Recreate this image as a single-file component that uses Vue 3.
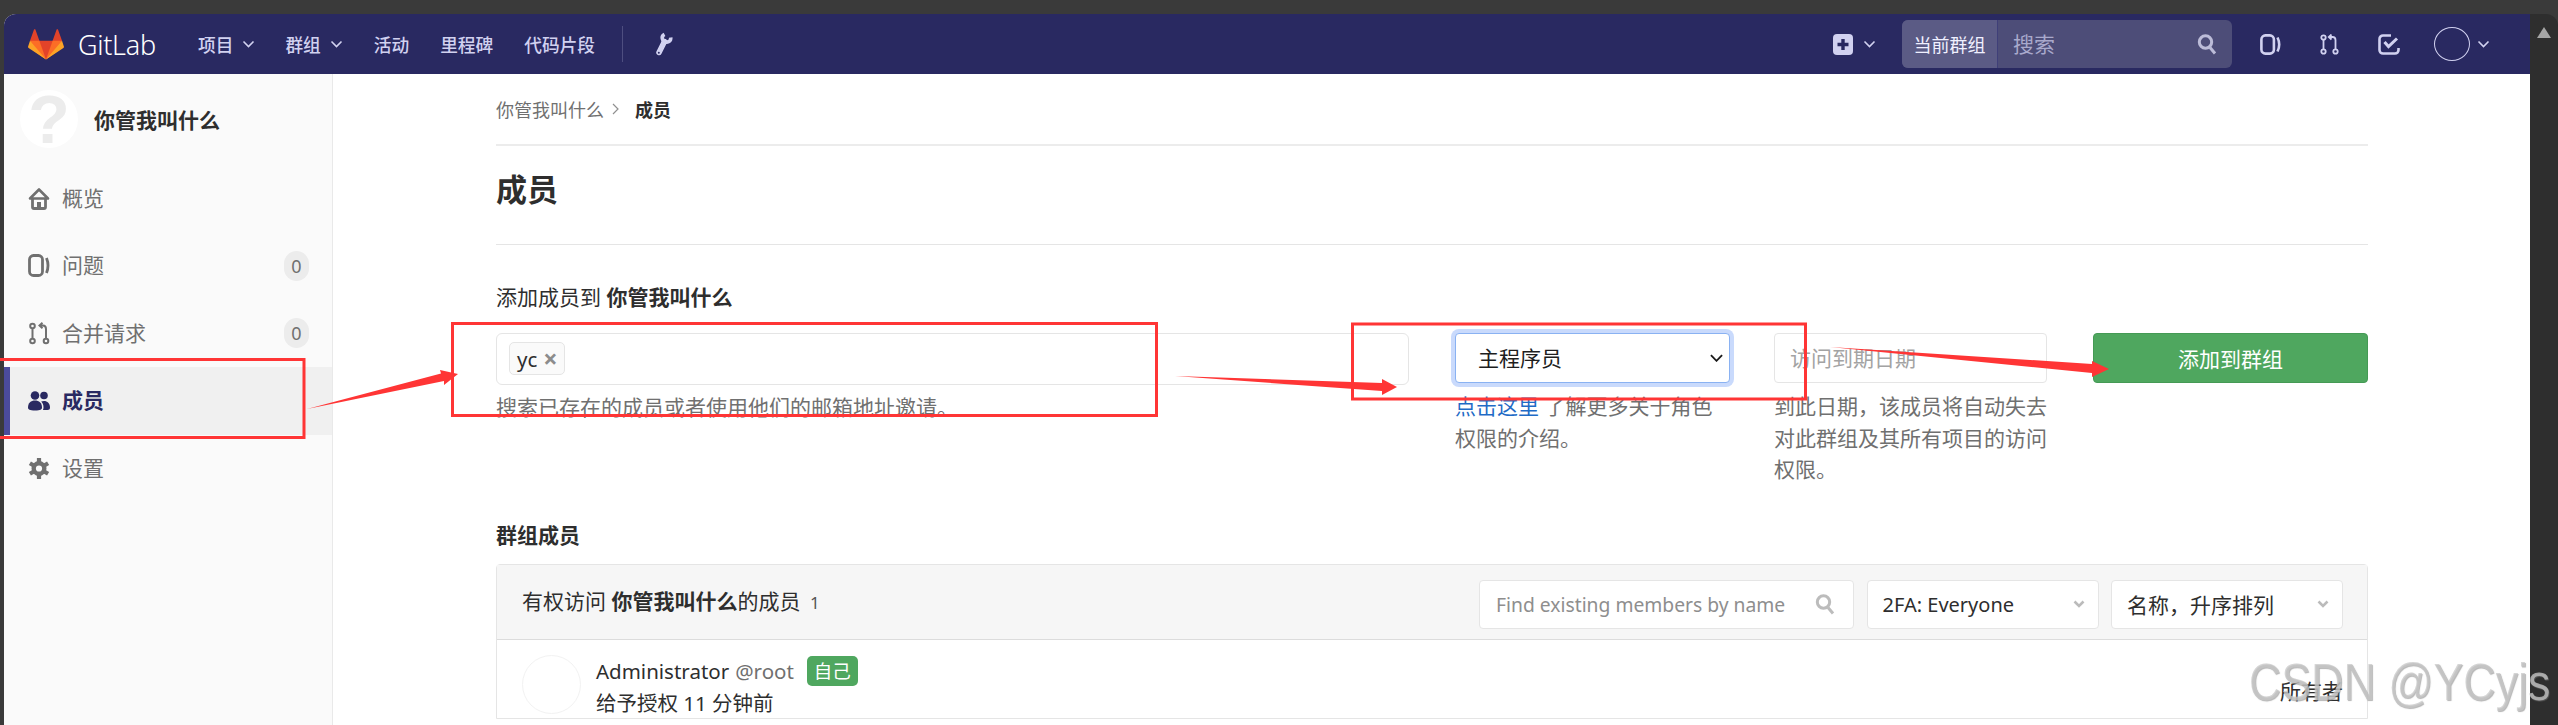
<script setup>
const sideItems = [
  { key: 'home', label: '概览' },
  { key: 'issues', label: '问题', count: 0 },
  { key: 'mr', label: '合并请求', count: 0 },
  { key: 'users', label: '成员', active: true },
  { key: 'gear', label: '设置' },
]
</script>

<template>
  <div class="window">
    <div class="page">
      <header class="nav">
        <div class="nav-left">
          <svg class="logo" viewBox="0 0 36 36" preserveAspectRatio="none">
            <path fill="#e24329" d="M2 14l9.38 9v-9l-4-12.28c-.205-.632-1.176-.632-1.38 0z"/>
            <path fill="#e24329" d="M34 14l-9.38 9v-9l4-12.28c.205-.632 1.176-.632 1.38 0z"/>
            <path fill="#e24329" d="M18 34.38 3 14h30z"/>
            <path fill="#fc6d26" d="M18 34.38 11.38 14H2l4 11z"/>
            <path fill="#fc6d26" d="M18 34.38 24.62 14H34l-4 11z"/>
            <path fill="#fca326" d="M2 14L.1 20.16c-.18.565 0 1.2.5 1.56l17.42 12.66z"/>
            <path fill="#fca326" d="M34 14l1.9 6.16c.18.565 0 1.2-.5 1.56L18 34.38z"/>
          </svg>
          <span class="brand">GitLab</span>
          <span class="nav-link first">项目<svg class="chev" viewBox="0 0 12 8"><path d="M1 1.500l5 5 5-5"/></svg></span>
          <span class="nav-link second">群组<svg class="chev" viewBox="0 0 12 8"><path d="M1 1.500l5 5 5-5"/></svg></span>
          <span class="nav-link">活动</span>
          <span class="nav-link">里程碑</span>
          <span class="nav-link">代码片段</span>
          <span class="nav-divider"></span>
          <svg class="wrench" viewBox="0 0 18 24">
            <path d="M4 20.500L9.500 9.500" fill="none" stroke="#d1d1f0" stroke-width="5.500" stroke-linecap="round"/>
            <path d="M9.500 2.300A4.200 4.200 0 1 0 15.700 5.500" fill="none" stroke="#d1d1f0" stroke-width="3.600"/>
            <circle cx="3.800" cy="20.800" r="1" fill="#292961"/>
          </svg>
        </div>
        <div class="nav-right">
          <svg class="plus" viewBox="0 0 20 21">
            <rect width="20" height="21" rx="4" fill="#d1d1f0"/>
            <path d="M10 5v11M4.500 10.500h11" stroke="#292961" stroke-width="3.400"/>
          </svg>
          <svg class="chev plus-chev" viewBox="0 0 12 8"><path d="M1 1.500l5 5 5-5"/></svg>
          <div class="search">
            <span class="scope">当前群组</span>
            <input class="search-input" placeholder="搜索" />
            <svg class="search-icon" viewBox="0 0 20 22"><circle cx="8.500" cy="9" r="6.200"/><path d="M13 14.500l5 6"/></svg>
          </div>
          <svg class="nav-icon issue-i" viewBox="0 0 21 21">
            <rect x="1.400" y="1.400" width="12.500" height="18.200" rx="4"/>
            <path d="M17.500 3.500c2.200 4.500 2.200 9.500 0 14"/>
          </svg>
          <svg class="nav-icon mr-i" viewBox="0 0 19 21">
            <circle cx="3.500" cy="3.500" r="2.200"/><circle cx="3.500" cy="17.500" r="2.200"/><circle cx="15.500" cy="17.500" r="2.200"/>
            <path d="M3.500 5.700v9.600M15.500 15.300V6c0-2-1-3-3-3H9M11.500 .5L8.800 3l2.700 2.500"/>
          </svg>
          <svg class="nav-icon todo-i" viewBox="0 0 22 21">
            <path d="M13 1.500H5a3.500 3.500 0 0 0-3.500 3.500v11A3.500 3.500 0 0 0 5 19.500h12a3.500 3.500 0 0 0 3.500-3.500v-2"/>
            <path d="M6.500 8l4 4.500 8.500-8" stroke-width="3"/>
          </svg>
          <span class="nav-avatar"></span>
          <svg class="chev" viewBox="0 0 12 8"><path d="M1 1.500l5 5 5-5"/></svg>
        </div>
      </header>

      <div class="body">
        <aside class="sidebar">
          <div class="context">
            <div class="group-avatar">?</div>
            <strong class="group-name">你管我叫什么</strong>
          </div>
          <ul class="side-list">
            <li v-for="item in sideItems" :key="item.key" class="side-item" :class="{ active: item.active }">
              <svg v-if="item.key === 'home'" class="side-icon" viewBox="0 0 22 23">
                <path d="M2 11.500L11 2.500l9 9z" fill="none" stroke="currentColor" stroke-width="2.600" stroke-linejoin="round"/>
                <path d="M4.500 12v8a1.500 1.500 0 0 0 1.500 1.500h10a1.500 1.500 0 0 0 1.500-1.500v-8" fill="none" stroke="currentColor" stroke-width="2.800"/>
                <rect x="9" y="15" width="4" height="7" fill="currentColor"/>
              </svg>
              <svg v-else-if="item.key === 'issues'" class="side-icon stroke" viewBox="0 0 22 23">
                <rect x="1.500" y="1.500" width="13" height="20" rx="4"/>
                <path d="M18.500 4c2 5 2 10 0 15"/>
              </svg>
              <svg v-else-if="item.key === 'mr'" class="side-icon stroke thin" viewBox="0 0 22 23">
                <circle cx="4.500" cy="4" r="2.300"/><circle cx="4.500" cy="19" r="2.300"/><circle cx="18" cy="19" r="2.300"/>
                <path d="M4.500 6.300v10.400M18 16.700V7c0-2-1-3.500-3-3.500h-3M14.500 .8l-3 2.700 3 2.700"/>
              </svg>
              <svg v-else-if="item.key === 'users'" class="side-icon" viewBox="0 0 22 20">
                <circle cx="7" cy="5" r="4.300" fill="currentColor"/>
                <circle cx="16" cy="5" r="3.800" fill="currentColor"/>
                <path fill="currentColor" d="M0 17c0-4.500 3-7 7-7s7 2.500 7 7c0 2-1.500 3-7 3s-7-1-7-3z"/>
                <path fill="currentColor" d="M15 19.500h4.500c1.500 0 2.500-.7 2.500-2.500 0-4-2.500-6.500-6-6.500-1.200 0-2 .2-2.800.6 1.500 1.400 2.300 3.400 2.300 5.900 0 1-.2 1.800-.5 2.500z"/>
              </svg>
              <svg v-else class="side-icon" viewBox="0 0 22 22">
                <circle cx="11" cy="11" r="5.300" fill="none" stroke="currentColor" stroke-width="4.400"/>
                <path stroke="currentColor" stroke-width="4.200" d="M11 .5V5M20.100 5.750L16.200 8M20.100 16.250L16.200 14M11 21.500V17M1.900 16.250L5.800 14M1.900 5.750L5.800 8"/>
              </svg>
              <span class="side-label">{{ item.label }}</span>
              <span v-if="item.count !== undefined" class="side-badge">{{ item.count }}</span>
            </li>
          </ul>
        </aside>

        <main class="main">
          <nav class="crumbs">
            <span class="crumb">你管我叫什么</span>
            <svg class="crumb-sep" viewBox="0 0 7 12"><path d="M1 1l5 5-5 5"/></svg>
            <strong class="crumb-current">成员</strong>
          </nav>
          <div class="title-wrap"><h1 class="title">成员</h1></div>

          <h2 class="add-heading">添加成员到 <strong>你管我叫什么</strong></h2>
          <div class="form-row">
            <div class="col col-member">
              <div class="member-input">
                <span class="token">yc<b class="token-x">×</b></span>
              </div>
              <p class="help member-help">搜索已存在的成员或者使用他们的邮箱地址邀请。</p>
            </div>
            <div class="col col-role">
              <div class="role-wrap">
                <select class="role-select">
                  <option>主程序员</option>
                </select>
                <svg class="role-chev" viewBox="0 0 14 8"><path d="M1 1l6 6 6-6"/></svg>
              </div>
              <p class="help"><a class="link">点击这里</a> 了解更多关于角色<br />权限的介绍。</p>
            </div>
            <div class="col col-date">
              <input class="date-input" placeholder="访问到期日期" />
              <p class="help">到此日期，该成员将自动失去对此群组及其所有项目的访问权限。</p>
            </div>
            <button class="add-btn">添加到群组</button>
          </div>

          <h3 class="members-heading">群组成员</h3>
          <section class="panel">
            <div class="panel-head">
              <div class="panel-title">有权访问 <strong>你管我叫什么</strong>的成员 <span class="count">1</span></div>
              <div class="filters">
                <div class="filter-search">
                  <input class="filter-input" placeholder="Find existing members by name" />
                  <svg class="filter-icon" viewBox="0 0 20 22"><circle cx="8.500" cy="9" r="6.200"/><path d="M13 14.500l5 6"/></svg>
                </div>
                <div class="filter-select latin">2FA: Everyone<svg class="filter-chev" viewBox="0 0 12 8"><path d="M1.500 1.500l4.500 4.500 4.500-4.500"/></svg></div>
                <div class="filter-select">名称，升序排列<svg class="filter-chev" viewBox="0 0 12 8"><path d="M1.500 1.500l4.500 4.500 4.500-4.500"/></svg></div>
              </div>
            </div>
            <div class="member-row">
              <span class="member-avatar"></span>
              <div class="member-info">
                <div class="member-name">Administrator <span class="handle">@root</span><span class="self">自己</span></div>
                <div class="member-meta">给予授权 11 分钟前</div>
              </div>
              <span class="member-role">所有者</span>
            </div>
          </section>
        </main>
      </div>
    </div>

    <div class="scrollbar"><span class="scroll-up"></span></div>

    <svg class="marks" viewBox="0 0 2558 725">
      <g fill="none" stroke="#ff3535" stroke-width="3">
        <rect x="-3" y="359.500" width="307" height="78"/>
        <rect x="452.500" y="323.500" width="704" height="92"/>
        <rect x="1352.500" y="324" width="453" height="75"/>
      </g>
      <g fill="#ff3535">
        <path d="M307 409L441 373.500 440 370 458 374 444 385 444 381z"/>
        <path d="M1175 376L1382 383V379L1397 387 1382 395V391z"/>
        <path d="M1830 347L2092 364V361L2109 369 2092 377V373z"/>
      </g>
    </svg>
    <span class="watermark">CSDN @YCyjs</span>
  </div>
</template>

<style>
html, body { margin: 0; background: #3a3a3a; }
</style>

<style scoped>
.window {
  position: relative;
  width: 2558px;
  height: 725px;
  overflow: hidden;
  display: flex;
  padding: 14px 0 0 4px;
  box-sizing: border-box;
  background: #3a3a3a;
  font-family: "Noto Sans", "Noto Sans CJK SC", sans-serif;
  font-size: 21px;
  color: #2e2e2e;
}
.page {
  width: 2526px;
  height: 711px;
  display: flex;
  flex-direction: column;
  background: #fff;
  border-top-left-radius: 12px;
  overflow: hidden;
}
.scrollbar {
  width: 28px;
  background: #2e2e2e;
  border-top-right-radius: 12px;
  display: flex;
  justify-content: center;
  padding-top: 13px;
  box-sizing: border-box;
}
.scroll-up {
  width: 0;
  height: 0;
  border-left: 7px solid transparent;
  border-right: 7px solid transparent;
  border-bottom: 11px solid #a5a5a5;
}

/* top bar */
.nav {
  height: 60px;
  flex: none;
  background: #292961;
  display: flex;
  justify-content: space-between;
  align-items: center;
  padding: 0 40px 0 24px;
  box-sizing: border-box;
  color: #d1d1f0;
}
.nav-left, .nav-right { display: flex; align-items: center; }
.logo { width: 36px; height: 33px; }
.brand { margin-left: 14px; color: #fff; font-size: 27px; letter-spacing: -0.300px; font-weight: 300; width: 78px; }
.nav-link {
  display: flex;
  align-items: center;
  margin-left: 31px;
  font-size: 17.700px;
  font-weight: 500;
}
.nav-link.first { margin-left: 42px; }
.nav-link.second { margin-left: 30px; }
.chev { width: 13px; height: 8px; margin-left: 9px; fill: none; stroke: #d1d1f0; stroke-width: 1.600; }
.nav-divider { width: 1px; height: 36px; background: #4e4e80; margin-left: 27px; }
.wrench { width: 18px; height: 24px; margin-left: 32px; }
.plus { width: 20px; height: 21px; }
.plus-chev { margin-left: 10px; }
.search {
  width: 330px;
  height: 48px;
  margin-left: 26px;
  display: flex;
  align-items: center;
  background: #4d4d78;
  border-radius: 6px;
  overflow: hidden;
}
.scope {
  width: 96px;
  height: 100%;
  box-sizing: border-box;
  background: #5b5b85;
  border-right: 1px solid #3f3f78;
  color: #f0f0ff;
  font-size: 18px;
  display: flex;
  align-items: center;
  justify-content: center;
}
.search-input {
  flex: 1;
  min-width: 0;
  height: 100%;
  border: 0;
  padding: 0 0 0 15px;
  background: transparent;
  font: inherit;
  font-size: 21px;
}
.search-input::placeholder { color: #a9a9cc; opacity: 1; }
.search-icon { width: 20px; height: 22px; margin-right: 15px; fill: none; stroke: #bcbcd8; stroke-width: 3; }
.nav-icon { fill: none; stroke: #d1d1f0; stroke-width: 2.600; height: 21px; }
.issue-i { width: 21px; margin-left: 28px; }
.mr-i { width: 19px; margin-left: 39px; stroke-width: 1.800; }
.todo-i { width: 22px; margin-left: 39px; }
.nav-avatar {
  width: 36px;
  height: 34px;
  margin-left: 34px;
  border: 1px solid #d1d1f0;
  border-radius: 50%;
  box-sizing: border-box;
}
.nav-avatar + .chev { margin-left: 7px; }

/* sidebar */
.body { flex: 1; display: flex; min-height: 0; }
.sidebar {
  width: 329px;
  flex: none;
  box-sizing: border-box;
  background: #fafafa;
  border-right: 1px solid #e9e9e9;
  color: #707070;
}
.context { display: flex; align-items: center; padding: 16px 0 0 16px; }
.group-avatar {
  width: 58px;
  height: 58px;
  border-radius: 50%;
  background: #fff;
  color: #ececec;
  font: 700 68px/58px "Liberation Sans", sans-serif;
  text-align: center;
}
.group-name { margin-left: 16px; color: #2e2e2e; font-size: 21px; }
.side-list { list-style: none; margin: 16.500px 0 0; padding: 0; }
.side-item {
  height: 67.500px;
  display: flex;
  align-items: center;
  padding: 0 23px 0 24px;
  box-sizing: border-box;
}
.side-item.active {
  background: #f0f0f0;
  box-shadow: inset 6px 0 0 #4b4b9b;
  color: #292961;
  font-weight: 700;
}
.side-icon { width: 22px; height: 23px; flex: none; }
.side-icon.stroke { fill: none; stroke: currentColor; stroke-width: 2.800; }
.side-icon.thin { stroke-width: 2; }
.side-label { margin: 0 0 3px 12px; }
.side-badge {
  margin-left: auto;
  width: 25px;
  height: 30px;
  border-radius: 13px;
  background: #ececec;
  font-size: 18px;
  display: flex;
  align-items: center;
  justify-content: center;
}

/* main */
.main { flex: 1; min-width: 0; padding: 0 162px 0 163px; box-sizing: border-box; }
.crumbs {
  height: 72px;
  box-sizing: border-box;
  border-bottom: 2px solid #ececec;
  display: flex;
  align-items: center;
  padding-bottom: 1px;
  font-size: 18px;
  color: #707070;
}
.crumb-sep { width: 7px; height: 12px; margin: 0 16px 0 8px; fill: none; stroke: #909090; stroke-width: 1.200; }
.crumb-current { color: #2e2e2e; }
.title-wrap { height: 99px; box-sizing: border-box; border-bottom: 1px solid #e5e5e5; display: flex; align-items: center; padding-bottom: 11px; }
.title { margin: 0; font-size: 31px; font-weight: 700; line-height: 1; }
.add-heading { margin: 36px 0 20px; font-size: 21px; font-weight: 400; line-height: 32px; }
.form-row { display: flex; align-items: flex-start; }
.col { flex: none; }
.col-member { width: 913px; }
.col-role { width: 275px; margin-left: 46px; }
.col-date { width: 273px; margin-left: 44px; }
.member-input {
  height: 52px;
  box-sizing: border-box;
  border: 1px solid #e5e5e5;
  border-radius: 6px;
  padding: 8px 0 0 12px;
}
.token {
  display: inline-flex;
  align-items: center;
  width: 56px;
  height: 33px;
  box-sizing: border-box;
  padding-left: 7px;
  background: #fafafa;
  border: 1px solid #e5e5e5;
  border-radius: 5px;
  font-size: 20.500px;
}
.token-x { margin-left: 6px; color: #8c8c8c; font-size: 25px; line-height: 1; }
.help { margin: 8px 0 0; color: #707070; line-height: 31.500px; }
.member-help { margin-top: 7px; }
.link { color: #1f6bc6; }
.role-wrap { position: relative; }
.role-select {
  display: block;
  width: 275px;
  height: 50px;
  box-sizing: border-box;
  border: 1px solid #8ab2f2;
  border-radius: 4px;
  box-shadow: 0 0 0 4px #c9dafc;
  background: #fff;
  color: #1e1e1e;
  font: inherit;
  padding-left: 22px;
  outline: none;
  appearance: none;
}
.role-chev {
  position: absolute;
  right: 7px;
  top: 21px;
  width: 13px;
  height: 8px;
  fill: none;
  stroke: #1a1a1a;
  stroke-width: 2;
  pointer-events: none;
}
.date-input {
  display: block;
  width: 273px;
  height: 50px;
  box-sizing: border-box;
  border: 1px solid #e5e5e5;
  border-radius: 4px;
  padding: 0 0 0 15px;
  font: inherit;
}
.date-input::placeholder { color: #a3a3a3; opacity: 1; }
.add-btn {
  width: 275px;
  height: 50px;
  flex: none;
  margin-left: 46px;
  border: 1px solid #459a55;
  border-radius: 4px;
  background: #4fa75f;
  color: #fff;
  font: inherit;
}
.members-heading { margin: 33px 0 13px; font-size: 21px; font-weight: 700; line-height: 32px; }
.panel { border: 1px solid #e5e5e5; border-radius: 4px 4px 0 0; }
.panel-head {
  height: 75px;
  box-sizing: border-box;
  background: #f6f6f6;
  border-bottom: 1px solid #dcdcdc;
  display: flex;
  align-items: center;
  justify-content: space-between;
  padding: 5px 24px 0 25px;
}
.panel-title { margin-bottom: 8px; }
.count { margin-left: 4px; font-size: 17px; color: #555; }
.filters { display: flex; gap: 12.500px; }
.filter-search, .filter-select {
  height: 49px;
  box-sizing: border-box;
  background: #fff;
  border: 1px solid #e5e5e5;
  border-radius: 4px;
  display: flex;
  align-items: center;
}
.filter-search { width: 375px; padding: 0 18px 0 16px; }
.filter-input {
  flex: 1;
  min-width: 0;
  border: 0;
  padding: 0;
  font: inherit;
  font-size: 19.300px;
  background: transparent;
}
.filter-input::placeholder { color: #8e8e8e; opacity: 1; }
.filter-icon { width: 20px; height: 22px; fill: none; stroke: #bcbcbc; stroke-width: 3; }
.filter-select { width: 232px; padding: 0 13px 0 15px; justify-content: space-between; }
.filter-select.latin { font-size: 20px; }
.filter-chev { width: 12px; height: 8px; fill: none; stroke: #bbb; stroke-width: 2.600; }
.member-row { display: flex; padding: 15px 24px 0 25px; }
.member-avatar {
  width: 59px;
  height: 59px;
  flex: none;
  border: 1px solid #f2f2f2;
  border-radius: 50%;
  box-sizing: border-box;
}
.member-info { margin: -1px 0 0 15px; flex: 1; }
.member-name { display: flex; align-items: center; gap: 6px; line-height: 34px; font-size: 20.500px; }
.handle { color: #707070; }
.self {
  margin-left: 7px;
  width: 51px;
  height: 30px;
  border-radius: 5px;
  background: #4fa75f;
  color: #fff;
  display: inline-flex;
  align-items: center;
  justify-content: center;
  font-size: 18.500px;
}
.member-meta { line-height: 30px; font-size: 20.500px; }
.member-role { align-self: flex-start; margin-top: 20px; color: #2e2e2e; }

/* overlays */
.marks { position: absolute; left: 0; top: 0; width: 2558px; height: 725px; pointer-events: none; }
.watermark {
  position: absolute;
  left: 2249px;
  top: 652px;
  font: 400 52px/60px "Liberation Sans", sans-serif;
  color: rgba(200, 200, 200, 0.75);
  text-shadow: 1px 1px 1px rgba(120, 120, 120, 0.55);
  white-space: nowrap;
  pointer-events: none;
  transform: scaleX(0.86);
  transform-origin: left top;
}
</style>
